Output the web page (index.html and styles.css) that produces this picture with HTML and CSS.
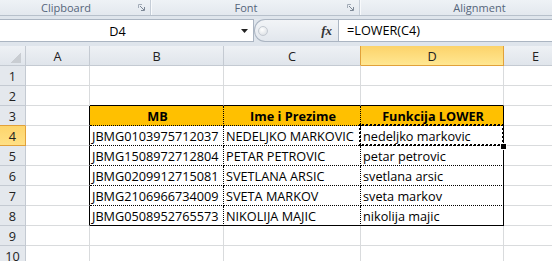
FILE: index.html
```html
<!DOCTYPE html>
<html lang="sr">
<head>
    <meta charset="UTF-8">
    <meta name="viewport" content="width=device-width, initial-scale=1.0">
    <title>Funkcija LOWER</title>
    <link rel="stylesheet" href="styles.css">
</head>
<body>

<!-- Ribbon group labels -->
<div class="ribbon">
    <div class="group g-clip">
        <span class="group-label">Clipboard</span>
        <span class="launcher"><svg width="7" height="7" viewBox="0 0 7 7"><path d="M0.5 4V0.5H4" fill="none" stroke="#a3acb8"/><path d="M2 2L6 6M6.5 3V6.5H3" fill="none" stroke="#7d8896"/></svg></span>
    </div>
    <div class="group g-font">
        <span class="group-label">Font</span>
        <span class="launcher"><svg width="7" height="7" viewBox="0 0 7 7"><path d="M0.5 4V0.5H4" fill="none" stroke="#a3acb8"/><path d="M2 2L6 6M6.5 3V6.5H3" fill="none" stroke="#7d8896"/></svg></span>
    </div>
    <div class="group g-align">
        <span class="group-label">Alignment</span>
        <span class="launcher"></span>
    </div>
</div>

<!-- Formula bar -->
<div class="fbar">
    <div class="namebox">
        <span class="ref">D4</span>
        <span class="drop"><svg width="7" height="4" viewBox="0 0 7 4"><path d="M0 0H7L3.5 4Z" fill="#222"/></svg></span>
    </div>
    <div class="grip">
        <span class="knob"></span>
        <span class="fx">fx</span>
    </div>
    <div class="formula">=LOWER(C4)</div>
</div>

<!-- Worksheet -->
<div class="sheet">
    <div class="corner"><span class="tri"></span></div>
    <div class="ch">A</div><div class="ch">B</div><div class="ch pre">C</div><div class="ch sel">D</div><div class="ch">E</div>

    <div class="rh">1</div><div class="c"></div><div class="c"></div><div class="c"></div><div class="c"></div><div class="c"></div>
    <div class="rh">2</div><div class="c"></div><div class="c tt"></div><div class="c tt"></div><div class="c tt"></div><div class="c"></div>
    <div class="rh pre-row">3</div><div class="c tl"></div><div class="c t th">MB</div><div class="c t th">Ime i Prezime</div><div class="c t th r">Funkcija LOWER</div><div class="c"></div>
    <div class="rh sel">4</div><div class="c tl"></div><div class="c t">JBMG0103975712037</div><div class="c t">NEDELJKO MARKOVIC</div><div class="c t r active">nedeljko markovic</div><div class="c"></div>
    <div class="rh">5</div><div class="c tl"></div><div class="c t">JBMG1508972712804</div><div class="c t">PETAR PETROVIC</div><div class="c t r">petar petrovic</div><div class="c"></div>
    <div class="rh">6</div><div class="c tl"></div><div class="c t">JBMG0209912715081</div><div class="c t">SVETLANA ARSIC</div><div class="c t r">svetlana arsic</div><div class="c"></div>
    <div class="rh">7</div><div class="c tl"></div><div class="c t">JBMG2106966734009</div><div class="c t">SVETA MARKOV</div><div class="c t r">sveta markov</div><div class="c"></div>
    <div class="rh">8</div><div class="c tl"></div><div class="c t b">JBMG0508952765573</div><div class="c t b">NIKOLIJA MAJIC</div><div class="c t r b">nikolija majic</div><div class="c"></div>
    <div class="rh">9</div><div class="c"></div><div class="c"></div><div class="c"></div><div class="c"></div><div class="c"></div>
    <div class="rh">10</div><div class="c"></div><div class="c"></div><div class="c"></div><div class="c"></div><div class="c"></div>
</div>

</body>
</html>
```

FILE: styles.css
```css
* {
    box-sizing: border-box;
}
body {
    margin: 0;
    width: 552px;
    height: 261px;
    overflow: hidden;
    background-color: #dfe5ec;
    font-family: "Open Sans", "Liberation Sans", sans-serif;
    font-size: 12.7px;
    color: #000;
}

/* ribbon */
.ribbon {
    display: flex;
    height: 16px;
    background: linear-gradient(#eef2f6, #e3e8ee);
    border-bottom: 1px solid #b7c0cb;
    font-size: 11px;
    color: #55657a;
}
.group {
    display: flex;
    align-items: center;
    flex: none;
    border-right: 1px solid #c5cdd7;
    box-shadow: 1px 0 0 #f8fafc;
}
.g-clip {
    width: 151px;
}
.g-font {
    width: 209px;
}
.g-align {
    width: 258px;
}
.group-label {
    flex: 1;
    text-align: center;
    line-height: 15px;
}
.launcher {
    width: 18px;
    display: flex;
    justify-content: center;
}

/* formula bar */
.fbar {
    display: flex;
    height: 23px;
    margin-top: 3px;
    margin-bottom: 4px;
}
.namebox {
    width: 254px;
    display: flex;
    align-items: center;
    background-color: #fff;
    border: 1px solid #abb5c2;
    border-left: none;
}
.ref {
    flex: 1;
    text-align: center;
}
.drop {
    width: 18px;
    display: flex;
    justify-content: center;
}
.grip {
    width: 84px;
    display: flex;
    align-items: center;
    background: linear-gradient(#f2f4f7, #e2e7ed);
    border: 1px solid #abb5c2;
    border-right: none;
    border-radius: 11px 0 0 11px;
}
.knob {
    width: 10px;
    height: 10px;
    margin-left: 3px;
    border-radius: 50%;
    border: 1px solid #c3c9d1;
    background: radial-gradient(circle at 40% 35%, #fff, #d4d9df);
}
.fx {
    margin-left: auto;
    margin-right: 6px;
    font-family: "Liberation Serif", serif;
    font-style: italic;
    font-weight: bold;
    font-size: 13px;
    color: #333;
}
.formula {
    flex: 1;
    background-color: #fff;
    border: 1px solid #abb5c2;
    border-right: none;
    padding-left: 8px;
    line-height: 21px;
}

/* sheet */
.sheet {
    display: grid;
    grid-template-columns: 26px 64px 134px 137px 143px 64px;
    grid-auto-rows: 20px;
    background-color: #fff;
    line-height: 20px;
}
.corner, .ch, .rh {
    background: linear-gradient(#eef1f5, #e0e5eb);
    border-right: 1px solid #c4cad2;
    border-bottom: 1px solid #c4cad2;
    text-align: center;
    color: #222;
}
.rh {
    background: #e4e8ed;
}
.corner {
    display: flex;
    justify-content: flex-end;
    align-items: flex-end;
    padding: 0 4px 2px 0;
}
.tri {
    width: 10px;
    height: 10px;
    background: linear-gradient(135deg, transparent 50%, #c9cdd2 50%);
}
.ch.sel {
    background: linear-gradient(#fcd36a, #ffe792);
    border-right-color: #e1a13a;
    border-bottom-color: #e1a13a;
}
.ch.pre {
    border-right-color: #e1a13a;
}
.rh.sel {
    background: linear-gradient(#fdd56c, #ffe085);
    border-right-color: #e1a13a;
    border-bottom-color: #e1a13a;
}
.rh.pre-row {
    border-bottom-color: #e1a13a;
}
.c {
    border-right: 1px solid #d9dbdd;
    border-bottom: 1px solid #d9dbdd;
    padding-left: 2px;
    white-space: nowrap;
    overflow: hidden;
}

/* data table B3:D8 */
.tl {
    border-right-color: #000;
}
.tt {
    border-bottom-color: #000;
}
.t {
    border-right: 1px dotted #000;
    border-bottom: 1px dotted #000;
}
.t.r {
    border-right-style: solid;
}
.t.b {
    border-bottom-style: solid;
}
.th {
    background-color: #ffc000;
    font-weight: bold;
    text-align: center;
}

/* active cell D4 */
.active {
    position: relative;
    overflow: visible;
}
.active::after {
    content: "";
    position: absolute;
    left: -2px;
    top: -2px;
    right: -1px;
    bottom: -1px;
    border: 2px dotted #000;
}
.active::before {
    content: "";
    position: absolute;
    right: -3px;
    bottom: -4px;
    width: 5px;
    height: 5px;
    background-color: #000;
    outline: 1px solid #fff;
    z-index: 1;
}
```
